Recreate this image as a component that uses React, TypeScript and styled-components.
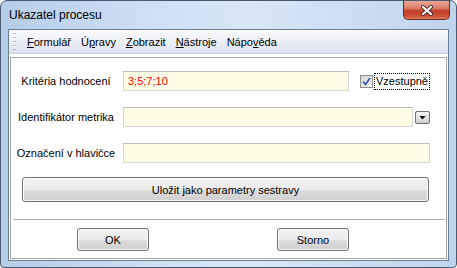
import styled, { createGlobalStyle } from "styled-components";

const GlobalStyle = createGlobalStyle`
  html, body {
    margin: 0;
    padding: 0;
    background: #ffffff;
  }
  body {
    font-family: "Liberation Sans", Arial, sans-serif;
    font-size: 11px;
    font-weight: 400;
    color: #000;
  }
`;

const Window = styled.div`
  box-sizing: border-box;
  width: 457px;
  height: 268px;
  display: flex;
  flex-direction: column;
  padding: 0 7px 6px 7px;
  border: 1px solid #4a5a6e;
  border-radius: 7px 7px 4px 4px;
  background: linear-gradient(
    to right,
    #b6cde9 0%,
    #cfe1f5 35%,
    #d8e7f7 55%,
    #bfd5ee 100%
  );
  overflow: hidden;
`;

const TitleBar = styled.div`
  height: 28px;
  display: flex;
  align-items: flex-start;
  justify-content: space-between;
  margin-right: -1px;
`;

const Title = styled.div`
  font-size: 12px;
  color: #000;
  padding: 7px 0 0 1px;
`;

const CloseButton = styled.div`
  width: 47px;
  height: 19px;
  box-sizing: border-box;
  border: 1px solid #6b2a22;
  border-top: none;
  border-radius: 0 0 5px 5px;
  background: linear-gradient(
    to bottom,
    #eaa897 0%,
    #dc7e68 40%,
    #c43f28 55%,
    #cc5236 85%,
    #dd7f62 100%
  );
  display: flex;
  align-items: center;
  justify-content: center;
`;

const Client = styled.div`
  flex: 1;
  display: flex;
  flex-direction: column;
  background: #ffffff;
  border: 1px solid #6f7d90;
`;

const MenuBar = styled.div`
  height: 24px;
  box-sizing: border-box;
  display: flex;
  align-items: center;
  background: linear-gradient(to bottom, #fbfbfd 0%, #eef0f7 45%, #dde1ee 100%);
  border-bottom: 1px solid #c9cfdc;
`;

const Grip = styled.div`
  width: 3px;
  height: 17px;
  margin: 0 6px 0 4px;
  background: repeating-linear-gradient(
    to bottom,
    #b4bac8 0px,
    #b4bac8 1px,
    #ffffff 1px,
    #ffffff 2px,
    transparent 2px,
    transparent 4px
  );
`;

const MenuItem = styled.span`
  padding: 0 5px;
  font-size: 11px;
  color: #000;

  u {
    text-decoration: underline;
    text-underline-offset: 1px;
  }
`;

const Panel = styled.div`
  flex: 1;
  margin: 3px 1px 1px 1px;
  border: 1px solid #a5a5a5;
  display: flex;
  flex-direction: column;
  padding: 13px 0 0 0;
`;

const Form = styled.div`
  display: grid;
  grid-template-columns: 112px 307px;
  grid-auto-rows: 20px;
  row-gap: 16px;
  align-items: center;
`;

const Label = styled.div`
  text-align: center;
  padding-right: 2px;
  white-space: nowrap;
`;

const FieldRow = styled.div`
  display: flex;
  align-items: center;
  height: 20px;
`;

const Input = styled.div<{ $width: number }>`
  box-sizing: border-box;
  width: ${(p) => p.$width}px;
  height: 20px;
  background: #fffde6;
  border: 1px solid #d6d6d6;
  border-top-color: #bdbdbd;
  padding: 0 4px;
  display: flex;
  align-items: center;
  color: #ff0000;
`;

const Check = styled.div`
  display: flex;
  align-items: center;
  margin-left: 11px;
`;

const CheckBox = styled.div`
  width: 13px;
  height: 13px;
  box-sizing: border-box;
  border: 1px solid #8a8c8e;
  background: linear-gradient(135deg, #d8d9db 0%, #e8e9ea 60%, #f4f4f4 100%);
  display: flex;
  align-items: center;
  justify-content: center;
`;

const CheckLabel = styled.span`
  margin-left: 1px;
  padding: 1px 1px 2px 1px;
  outline: 1px dotted #000;
  outline-offset: -1px;
  border: 1px solid transparent;
`;

const DropButton = styled.div`
  width: 15px;
  height: 13px;
  box-sizing: border-box;
  margin-left: 2px;
  border: 1px solid #6c6c6c;
  border-radius: 2px;
  background: linear-gradient(to bottom, #f4f4f4 0%, #e4e4e4 50%, #cfcfcf 100%);
  display: flex;
  align-items: center;
  justify-content: center;
`;

const Button = styled.div<{ $width?: number; $height: number }>`
  box-sizing: border-box;
  width: ${(p) => (p.$width ? `${p.$width}px` : "auto")};
  height: ${(p) => p.$height}px;
  border: 1px solid #707070;
  border-radius: 3px;
  background: linear-gradient(
    to bottom,
    #f2f2f2 0%,
    #ebebeb 50%,
    #dddddd 51%,
    #cfcfcf 100%
  );
  box-shadow: inset 0 0 0 1px #fbfbfb;
  display: flex;
  align-items: center;
  justify-content: center;
  font-weight: 400;
  color: #000;
`;

const SaveRow = styled.div`
  margin: 14px 17px 0 11px;
`;

const Separator = styled.div`
  height: 1px;
  margin: 17px 1px 0 2px;
  background: #a8a8a8;
`;

const ButtonRow = styled.div`
  display: flex;
  gap: 128px;
  padding-left: 66px;
  margin-top: 8px;
`;

const Underlined = ({ text, at }: { text: string; at: number }) => (
  <MenuItem>
    {text.slice(0, at)}
    <u>{text[at]}</u>
    {text.slice(at + 1)}
  </MenuItem>
);

export default function App() {
  return (
    <>
      <GlobalStyle />
      <Window>
        <TitleBar>
          <Title>Ukazatel procesu</Title>
          <CloseButton>
            <svg width="14" height="11" viewBox="0 0 14 11">
              <path
                d="M3 2 L11 9 M11 2 L3 9"
                stroke="#4a2a26"
                strokeWidth="4"
                strokeLinecap="round"
              />
              <path
                d="M3 2 L11 9 M11 2 L3 9"
                stroke="#ffffff"
                strokeWidth="2.2"
                strokeLinecap="round"
              />
            </svg>
          </CloseButton>
        </TitleBar>
        <Client>
          <MenuBar>
            <Grip />
            <Underlined text="Formulář" at={0} />
            <Underlined text="Úpravy" at={1} />
            <Underlined text="Zobrazit" at={0} />
            <Underlined text="Nástroje" at={0} />
            <Underlined text="Nápověda" at={4} />
          </MenuBar>
          <Panel>
            <Form>
              <Label>Kritéria hodnocení</Label>
              <FieldRow>
                <Input $width={226}>3;5;7;10</Input>
                <Check>
                  <CheckBox>
                    <svg width="9" height="9" viewBox="0 0 9 9">
                      <path
                        d="M1 4.5 L3.5 7.5 L8 1"
                        stroke="#3d57a8"
                        strokeWidth="1.8"
                        fill="none"
                      />
                    </svg>
                  </CheckBox>
                  <CheckLabel>Vzestupně</CheckLabel>
                </Check>
              </FieldRow>
              <Label>Identifikátor metrika</Label>
              <FieldRow>
                <Input $width={290} />
                <DropButton>
                  <svg width="9" height="7" viewBox="0 0 9 7">
                    <path d="M1.5 2 L7.5 2 L4.5 5.5 Z" fill="#000" />
                  </svg>
                </DropButton>
              </FieldRow>
              <Label>Označení v hlavičce</Label>
              <FieldRow>
                <Input $width={307} />
              </FieldRow>
            </Form>
            <SaveRow>
              <Button $height={25}>Uložit jako parametry sestravy</Button>
            </SaveRow>
            <Separator />
            <ButtonRow>
              <Button $width={72} $height={23}>
                OK
              </Button>
              <Button $width={72} $height={23}>
                Storno
              </Button>
            </ButtonRow>
          </Panel>
        </Client>
      </Window>
    </>
  );
}
